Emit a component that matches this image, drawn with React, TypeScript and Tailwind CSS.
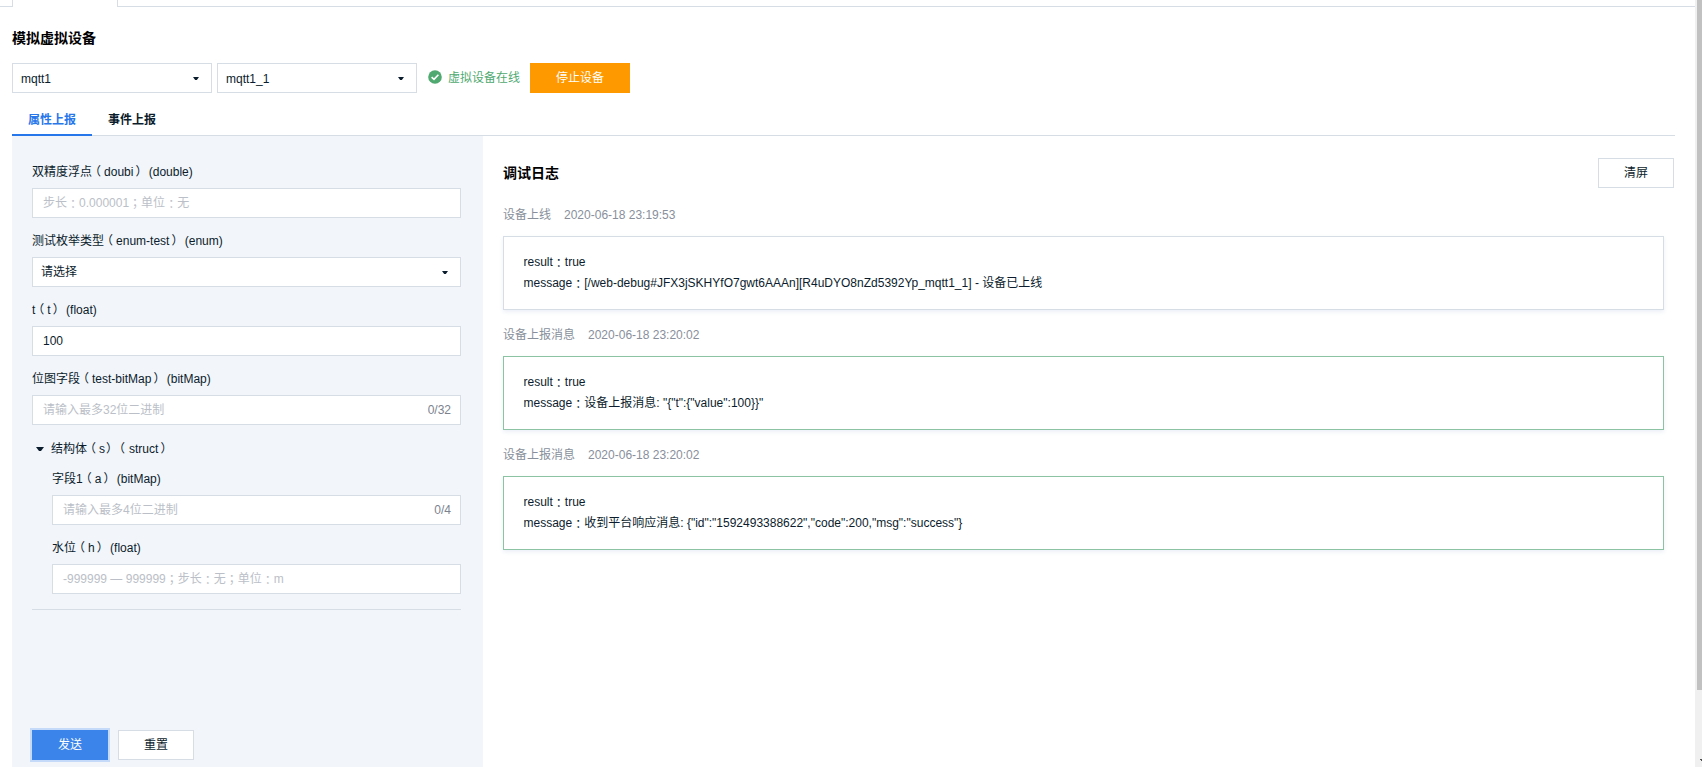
import type { ReactNode } from "react";

function Caret({ large = false }: { large?: boolean }) {
  return large ? (
    <svg width="8" height="4" viewBox="0 0 8 4">
      <path d="M0 0H8L5 4H3Z" fill="#0b1c2c" />
    </svg>
  ) : (
    <svg width="6" height="3" viewBox="0 0 6 3">
      <path d="M0 0H6L3.8 3H2.2Z" fill="#0b1c2c" />
    </svg>
  );
}

/* Full-width punctuation is centred in its cell. */
const punctuation: Record<string, string> = {
  "：": "inline-block translate-x-[3px] translate-y-px",
  "；": "inline-block translate-x-[3px]",
  "（": "inline-block -translate-x-[3px]",
  "）": "inline-block translate-x-[2px]",
  "）（": "inline-block w-6 translate-x-[1px] tracking-[1px]",
};

function Text({ children }: { children: string }) {
  return (
    <span className="whitespace-pre">
      {children.split(/(）（|[：；（）])/).map((part, i) =>
        punctuation[part] ? (
          <span key={i} className={punctuation[part]}>
            {part}
          </span>
        ) : (
          part
        ),
      )}
    </span>
  );
}

function Select({ value, className = "" }: { value: string; className?: string }) {
  return (
    <div className={`flex h-[30px] items-center justify-between border border-[#d7dde4] bg-white pr-[12px] pl-2 ${className}`}>
      <span>{value}</span>
      <Caret />
    </div>
  );
}

function Field({
  label,
  placeholder = "",
  value,
  count,
  children,
}: {
  label: string;
  placeholder?: string;
  value?: string;
  count?: string;
  children?: ReactNode;
}) {
  return (
    <div className="mb-3">
      <div className="h-[27px] leading-[22px]">
        <Text>{label}</Text>
      </div>
      {children ?? (
        <div className="flex h-[30px] items-center justify-between border border-[#d7dde4] bg-white pr-[9px] pl-[10px] leading-[18px]">
          {value ? (
            <span>{value}</span>
          ) : (
            <span className="text-[#bbc0c8]">
              <Text>{placeholder}</Text>
            </span>
          )}
          {count && <span className="text-[#7c838f]">{count}</span>}
        </div>
      )}
    </div>
  );
}

function Log({ title, time, message, success }: { title: string; time: string; message: string; success?: boolean }) {
  return (
    <div className="mb-[15px]">
      <div className="flex h-[31px] gap-[13px] leading-[20px] text-[#888f9b]">
        <span>{title}</span>
        <span>{time}</span>
      </div>
      <div
        className={`mr-[11px] h-[74px] border bg-white px-[19.5px] pt-[15px] leading-[21px] shadow-[0_2px_4px_rgba(55,99,170,0.1)] ${
          success ? "border-[#8bc3a3]" : "border-[#d7dde4]"
        }`}
      >
        <div className="h-[21px]">
          <Text>result：true</Text>
        </div>
        <div className="h-[21px]">
          <Text>{message}</Text>
        </div>
      </div>
    </div>
  );
}

const logs = [
  {
    title: "设备上线",
    time: "2020-06-18 23:19:53",
    message: "message：[/web-debug#JFX3jSKHYfO7gwt6AAAn][R4uDYO8nZd5392Yp_mqtt1_1] - 设备已上线",
  },
  {
    title: "设备上报消息",
    time: "2020-06-18 23:20:02",
    message: 'message：设备上报消息: "{"t":{"value":100}}"',
    success: true,
  },
  {
    title: "设备上报消息",
    time: "2020-06-18 23:20:02",
    message: 'message：收到平台响应消息: {"id":"1592493388622","code":200,"msg":"success"}',
    success: true,
  },
];

export default function App() {
  return (
    <div className="flex h-[767px] w-[1702px] overflow-hidden bg-white font-['Liberation_Sans','Noto_Sans_CJK_SC',sans-serif] text-[12px] text-[#0b1c2c]">
      <div className="flex w-[1695px] flex-col">
        <div className="flex h-[7px]">
          <div className="w-3 border-b border-[#d7dde4]" />
          <div className="w-[106px] border-x border-[#d7dde4]" />
          <div className="flex-1 border-b border-[#d7dde4]" />
        </div>

        <div className="flex flex-1 flex-col pr-5 pl-3">
          <h1 className="mt-[21px] h-[35px] text-[14px] leading-5 font-bold text-black">模拟虚拟设备</h1>
          <div className="flex h-[30px] items-center">
            <Select value="mqtt1" className="w-[200px] pt-px" />
            <Select value="mqtt1_1" className="ml-[5px] w-[200px] pt-px" />
            <svg width="14" height="14" viewBox="0 0 14 14" className="mb-[2px] ml-[11px]">
              <circle cx="7" cy="7" r="6.8" fill="#50a970" />
              <path d="M3.6 7.1L6 9.4L10.4 4.8" fill="none" stroke="#fff" strokeWidth="1.6" />
            </svg>
            <span className="ml-[6px] text-[#50a970]">虚拟设备在线</span>
            <button className="ml-[10px] h-[30px] w-[100px] bg-[#ff9900] text-white">停止设备</button>
          </div>

          <div className="mt-[11px] flex h-8 border-b border-[#d7dde4] font-bold">
            <div className="h-8 w-20 border-b-2 border-[#2776ea] text-center leading-[33px] text-[#2776ea]">属性上报</div>
            <div className="w-20 text-center leading-[33px]">事件上报</div>
          </div>

          <div className="flex flex-1">
            <div className="flex w-[471px] flex-col bg-[#f2f5fa] pt-[25px] pr-[22px] pl-5">
              <Field label="双精度浮点（doubi） (double)" placeholder="步长：0.000001；单位：无" />
              <Field label="测试枚举类型（enum-test） (enum)">
                <Select value="请选择" />
              </Field>
              <Field label="t（t） (float)" value="100" />
              <Field label="位图字段（test-bitMap） (bitMap)" placeholder="请输入最多32位二进制" count="0/32" />
              <div className="border-b border-[#d7dde4] pb-[3px]">
                <div className="flex h-[31px] items-center gap-[7px] pb-[7px] pl-1">
                  <Caret large />
                  <Text>结构体（s）（struct）</Text>
                </div>
                <div className="pl-5">
                  <Field label="字段1（a） (bitMap)" placeholder="请输入最多4位二进制" count="0/4" />
                  <Field label="水位（h） (float)" placeholder="-999999 — 999999；步长：无；单位：m" />
                </div>
              </div>
              <div className="mt-[120px] flex gap-[10px]">
                <button className="h-[30px] w-[76px] bg-[#3b84ea] text-white ring-2 ring-[#c5daf8]">发送</button>
                <button className="h-[30px] w-[76px] border border-[#d7dde4] bg-white">重置</button>
              </div>
            </div>

            <div className="flex-1 pt-[22px] pl-5">
              <div className="mb-[17px] flex h-[30px] items-center justify-between pr-px">
                <h2 className="text-[14px] font-bold text-black">调试日志</h2>
                <button className="h-[30px] w-[76px] border border-[#d7dde4] bg-white">清屏</button>
              </div>
              {logs.map((log, i) => (
                <Log key={i} {...log} />
              ))}
            </div>
          </div>
        </div>
      </div>

      <div className="flex w-[7px] flex-col justify-between bg-[#f0f0f0] pl-[2px]">
        <div className="h-[690px] bg-[#c1c1c1]" />
        <svg width="5" height="8" viewBox="0 0 5 8">
          <path d="M3 0H5V2H4V1H3Z" fill="#505050" />
        </svg>
      </div>
    </div>
  );
}
